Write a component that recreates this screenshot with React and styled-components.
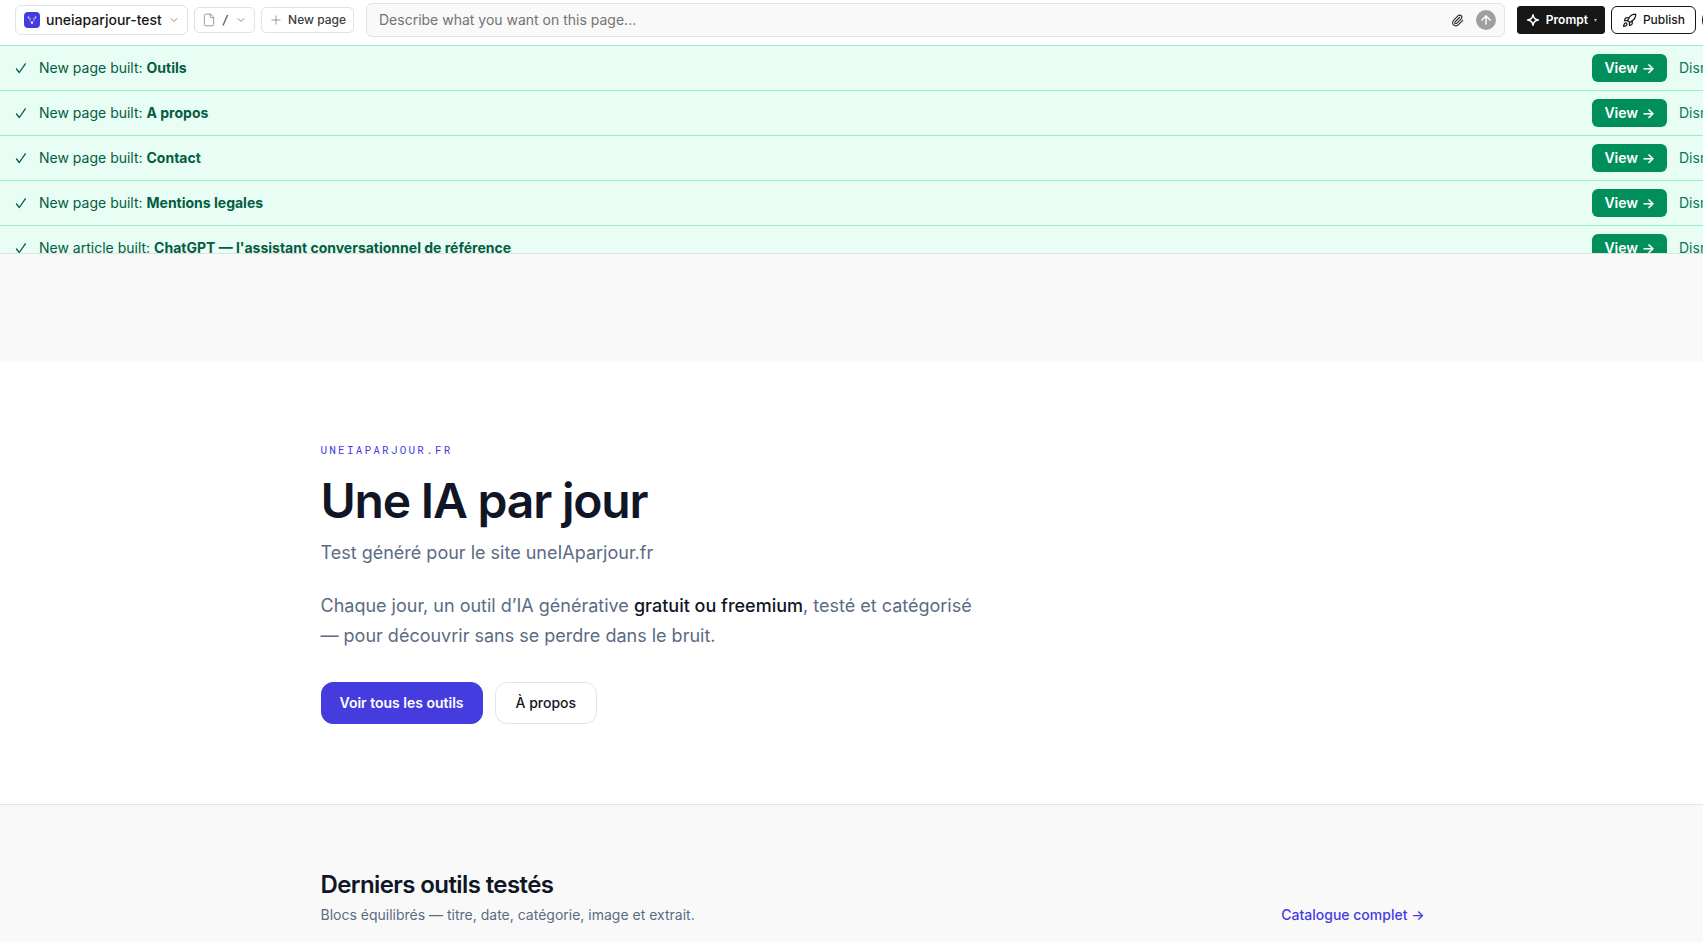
import React from 'react';
import styled, { createGlobalStyle } from 'styled-components';
import { ChevronDown, File, Plus, Paperclip, ArrowUp, Rocket } from 'lucide-react';

const GlobalStyle = createGlobalStyle`
  *, *::before, *::after { box-sizing: border-box; }
  html, body { margin: 0; min-height: 100%; }
  body {
    background: #f9f9f9;
    color: #171717;
    font-family: Inter, "Liberation Sans", sans-serif;
    font-size: 14px;
    line-height: 20px;
    overflow: hidden;
  }
  h1, h2, p { margin: 0; }
  button, input { font: inherit; color: inherit; margin: 0; }
  button { cursor: pointer; white-space: nowrap; }
  a { text-decoration: none; }
  svg { flex: none; display: block; }
`;

const Page = styled.div`
  width: calc(100% + 42px);
  height: 100vh;
  overflow: hidden;
`;

const Header = styled.header`
  height: 254px;
  overflow: hidden;
  border-bottom: 1px solid #dfe3e1;
  background: #fff;
`;

const Toolbar = styled.div`
  display: flex;
  align-items: center;
  gap: 12px;
  padding: 3px 15px 8px;
`;

const Group = styled.div`
  display: flex;
  align-items: center;
  gap: 6px;
`;

const ToolButton = styled.button`
  display: flex;
  align-items: center;
  gap: ${(p) => p.$gap || 6}px;
  height: ${(p) => (p.$large ? 30 : 26)}px;
  padding: 0 7px 0 ${(p) => (p.$large ? 8 : 7)}px;
  border: 1px solid #e2e2e2;
  border-radius: ${(p) => (p.$large ? 6 : 5)}px;
  background: #fff;
  color: ${(p) => (p.$large ? '#171717' : '#404040')};
  font-size: ${(p) => (p.$large ? 14 : 12)}px;
  font-weight: 500;
  svg { color: #8f8f8f; }
`;

const Path = styled.span`
  font-family: "DejaVu Sans Mono", monospace;
  font-size: 12px;
  font-weight: 400;
`;

const PromptBox = styled.form`
  display: flex;
  flex: 1;
  align-items: center;
  gap: 8px;
  height: 34px;
  padding: 0 8px 0 12px;
  border: 1px solid #e2e2e2;
  border-radius: 6px;
  background: #f9f9f9;
`;

const PromptInput = styled.input`
  flex: 1;
  min-width: 0;
  padding: 0;
  border: 0;
  outline: 0;
  background: transparent;
  &::placeholder { color: #737373; opacity: 1; }
`;

const IconButton = styled.button`
  display: flex;
  align-items: center;
  justify-content: center;
  width: 20px;
  height: 20px;
  padding: 0;
  border: 0;
  border-radius: 10px;
  background: ${(p) => (p.$filled ? '#9f9f9f' : 'transparent')};
  color: ${(p) => (p.$filled ? '#fff' : '#262626')};
`;

const ActionButton = styled.button`
  display: flex;
  align-items: center;
  gap: 6px;
  height: 28px;
  padding: 0 ${(p) => (p.$dark ? 7 : 10)}px 0 ${(p) => (p.$dark ? 8 : 10)}px;
  border: 1px solid #171717;
  border-radius: ${(p) => (p.$dark ? 3 : 6)}px;
  background: ${(p) => (p.$dark ? '#171717' : '#fff')};
  color: ${(p) => (p.$dark ? '#fff' : '#171717')};
  font-size: 12px;
  font-weight: ${(p) => (p.$dark ? 600 : 500)};
`;

const AccountButton = styled.button`
  width: 28px;
  height: 28px;
  padding: 0;
  border: 0;
  border-radius: 14px;
  background: #171717;
`;

const Notices = styled.ul`
  margin: 0;
  padding: 0;
  list-style: none;
  border-top: 1px solid #93f1c5;
`;

const Notice = styled.li`
  display: flex;
  align-items: center;
  gap: 12px;
  height: 45px;
  padding: 0 15px;
  border-bottom: 1px solid #93f1c5;
  background: #e8fdf3;
  color: #045c43;
`;

const NoticeText = styled.p`
  flex: 1;
  strong { font-weight: 700; }
`;

const ViewButton = styled.button`
  height: 28px;
  padding: 0 12px;
  border: 0;
  border-radius: 6px;
  background: #008f5a;
  color: #fff;
  font-weight: 600;
`;

const DismissButton = styled.button`
  width: 51px;
  padding: 0;
  border: 0;
  background: transparent;
  color: #087a55;
  text-align: left;
`;

const Hero = styled.section`
  margin-top: 108px;
  padding: 80px 0;
  border-bottom: 1px solid #e0e5ec;
  background: #fff;
`;

const Container = styled.div`
  max-width: 1152px;
  margin: 0 auto;
  padding: 0 24px;
`;

const Eyebrow = styled.p`
  color: #453cdf;
  font-family: "Roboto Mono", "Liberation Mono", monospace;
  font-size: 11px;
  line-height: 16px;
  letter-spacing: 0.2em;
`;

const Title = styled.h1`
  margin-top: 16px;
  color: #101626;
  font-size: 48px;
  font-weight: 600;
  line-height: 53px;
  letter-spacing: -0.025em;
`;

const Lead = styled.p`
  max-width: 672px;
  margin-top: ${(p) => (p.$intro ? 24 : 12)}px;
  color: #5b6b84;
  font-size: 18px;
  line-height: ${(p) => (p.$intro ? 30 : 28)}px;
  strong { color: #101626; font-weight: 500; }
`;

const Links = styled.div`
  display: flex;
  gap: 12px;
  margin-top: 31px;
`;

const LinkButton = styled.a`
  padding: 10px ${(p) => (p.$primary ? 18 : 20)}px;
  border: 1px solid ${(p) => (p.$primary ? '#453cdf' : '#e0e5ec')};
  border-radius: 12px;
  background: ${(p) => (p.$primary ? '#453cdf' : '#fff')};
  color: ${(p) => (p.$primary ? '#fff' : '#101626')};
  font-weight: ${(p) => (p.$primary ? 600 : 500)};
`;

const Latest = styled.section`
  padding: 64px 0;
`;

const LatestHead = styled.div`
  display: flex;
  align-items: flex-end;
  justify-content: space-between;
`;

const Heading = styled.h2`
  color: #101626;
  font-size: 24px;
  font-weight: 600;
  line-height: 32px;
  letter-spacing: -0.025em;
`;

const Sub = styled.p`
  margin-top: 4px;
  color: #5b6b84;
`;

const CatalogLink = styled.a`
  color: #453cdf;
  font-weight: 500;
`;

const Logo = () => (
  <svg width="16" height="16" viewBox="0 0 16 16" aria-hidden="true">
    <rect width="16" height="16" rx="4" fill="#453cdf" />
    <path d="M4.500 5.500 7.800 11M11.500 5.500 8.200 11" fill="none" stroke="#fff" strokeWidth="0.800" opacity="0.700" />
    <g fill="#fff">
      <circle cx="4.500" cy="5.300" r="0.800" />
      <circle cx="11.500" cy="5.300" r="0.800" />
      <circle cx="6.800" cy="6.500" r="0.500" opacity="0.700" />
      <circle cx="9.200" cy="6.500" r="0.500" opacity="0.700" />
      <circle cx="8" cy="10.800" r="1.100" />
    </g>
  </svg>
);

const Check = () => (
  <svg width="12" height="12" viewBox="0 0 12 12" fill="none" stroke="currentColor" strokeWidth="1.300" strokeLinecap="round" strokeLinejoin="round" aria-hidden="true">
    <path d="M1.500 7 4.300 10.500 10.300 1.800" />
  </svg>
);

const Spark = () => (
  <svg width="14" height="14" viewBox="0 0 14 14" fill="none" stroke="currentColor" strokeWidth="1.400" strokeLinejoin="round" aria-hidden="true">
    <path d="M7 1.600C7.400 5 9 6.600 12.400 7 9 7.400 7.400 9 7 12.400 6.600 9 5 7.400 1.600 7 5 6.600 6.600 5 7 1.600Z" />
  </svg>
);

const notices = [
  ['page', 'Outils'],
  ['page', 'A propos'],
  ['page', 'Contact'],
  ['page', 'Mentions legales'],
  ['article', "ChatGPT — l'assistant conversationnel de référence"],
];

export default function App() {
  return (
    <Page>
      <GlobalStyle />
      <Header>
        <Toolbar>
          <Group>
            <ToolButton $large type="button">
              <Logo />
              uneiaparjour-test
              <ChevronDown size={12} />
            </ToolButton>
            <ToolButton type="button" aria-label="Select page">
              <File size={14} strokeWidth={1.5} />
              <Path>/</Path>
              <ChevronDown size={12} />
            </ToolButton>
            <ToolButton type="button" $gap={5}>
              <Plus size={14} strokeWidth={1.5} />
              New page
            </ToolButton>
          </Group>
          <PromptBox>
            <PromptInput aria-label="Page description" placeholder="Describe what you want on this page..." />
            <IconButton type="button" aria-label="Attach a file">
              <Paperclip size={13} />
            </IconButton>
            <IconButton $filled type="button" aria-label="Send">
              <ArrowUp size={14} strokeWidth={2.5} />
            </IconButton>
          </PromptBox>
          <Group>
            <ActionButton $dark type="button">
              <Spark />
              Prompt
              <svg width="3" height="3" viewBox="0 0 3 3" fill="#bbb" aria-hidden="true"><path d="M0 0h3L1.500 3z" /></svg>
            </ActionButton>
            <ActionButton type="button">
              <Rocket size={15} />
              Publish
            </ActionButton>
            <AccountButton type="button" aria-label="Account" />
          </Group>
        </Toolbar>
        <Notices>
          {notices.map(([kind, name]) => (
            <Notice key={name}>
              <Check />
              <NoticeText>
                New {kind} built: <strong>{name}</strong>
              </NoticeText>
              <ViewButton type="button">View →</ViewButton>
              <DismissButton type="button">Dismiss</DismissButton>
            </Notice>
          ))}
        </Notices>
      </Header>
      <main>
        <Hero>
          <Container>
            <Eyebrow>UNEIAPARJOUR.FR</Eyebrow>
            <Title>Une IA par jour</Title>
            <Lead>Test généré pour le site uneIAparjour.fr</Lead>
            <Lead $intro>
              Chaque jour, un outil d’IA générative <strong>gratuit ou freemium</strong>, testé et catégorisé — pour
              découvrir sans se perdre dans le bruit.
            </Lead>
            <Links>
              <LinkButton $primary href="#outils">Voir tous les outils</LinkButton>
              <LinkButton href="#a-propos">À propos</LinkButton>
            </Links>
          </Container>
        </Hero>
        <Latest id="outils">
          <Container>
            <LatestHead>
              <div>
                <Heading>Derniers outils testés</Heading>
                <Sub>Blocs équilibrés — titre, date, catégorie, image et extrait.</Sub>
              </div>
              <CatalogLink href="#catalogue">Catalogue complet →</CatalogLink>
            </LatestHead>
          </Container>
        </Latest>
      </main>
    </Page>
  );
}
